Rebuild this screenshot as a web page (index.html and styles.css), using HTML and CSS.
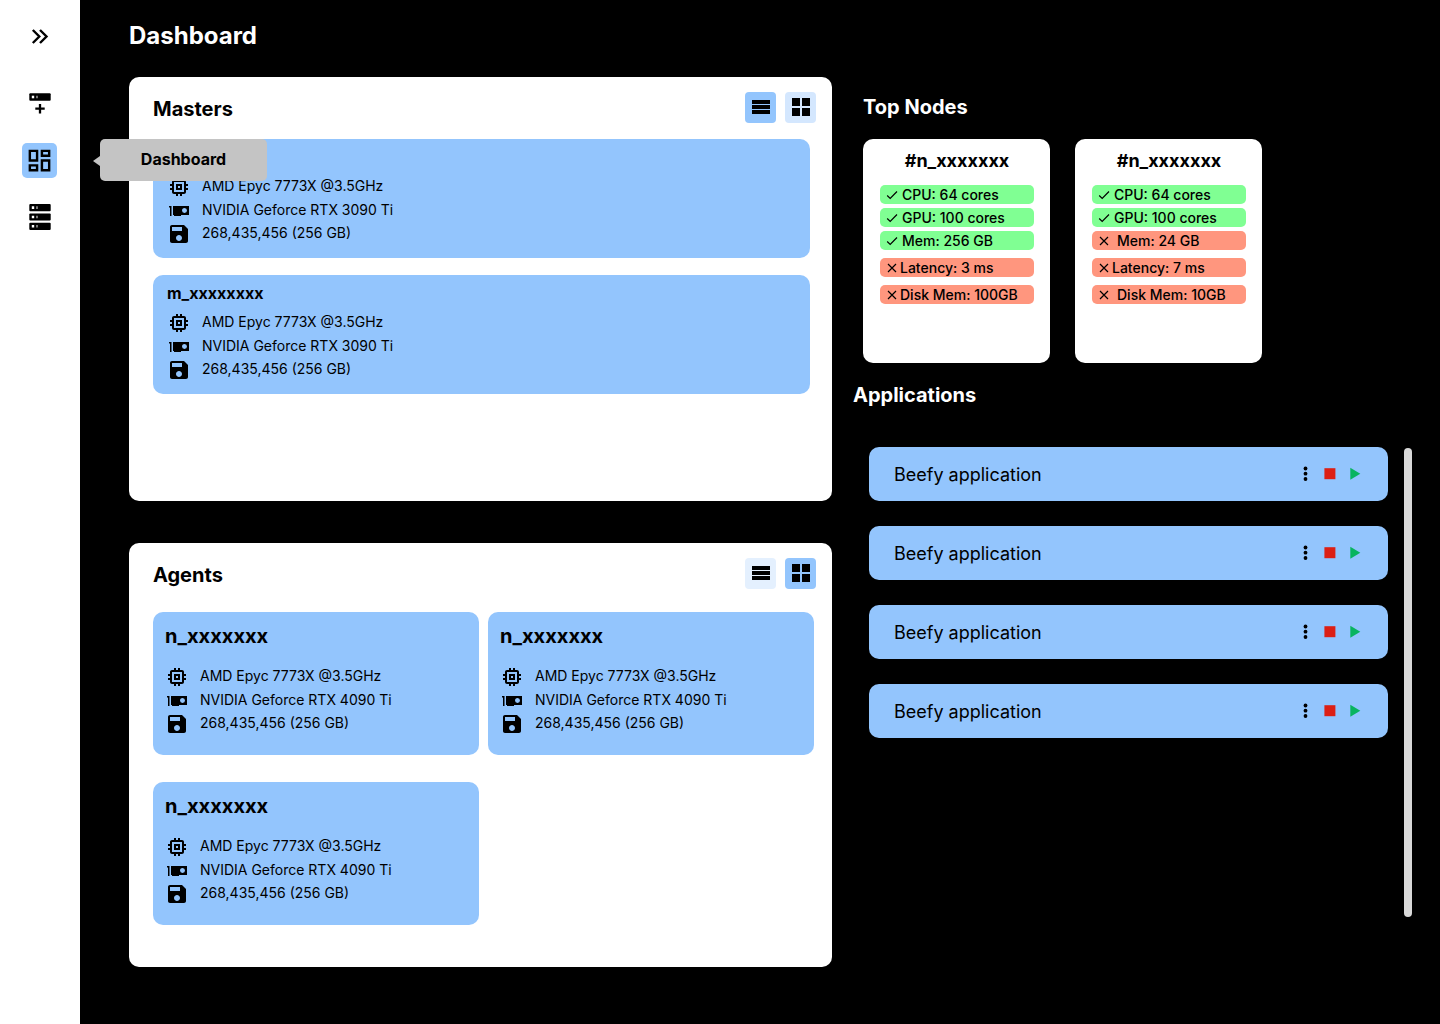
FILE: index.html
```html
<!DOCTYPE html>
<html lang="en">
<head>
<meta charset="utf-8">
<meta name="viewport" content="width=device-width, initial-scale=1">
<title>Dashboard</title>
<link rel="stylesheet" href="styles.css">
</head>
<body>
<svg class="sprite" aria-hidden="true">
  <symbol id="cpu" viewBox="0 0 24 24"><path d="M15 9H9v6h6V9zm-2 4h-2v-2h2v2zm8-2V9h-2V7c0-1.1-.9-2-2-2h-2V3h-2v2h-2V3H9v2H7c-1.1 0-2 .9-2 2v2H3v2h2v2H3v2h2v2c0 1.1.9 2 2 2h2v2h2v-2h2v2h2v-2h2c1.1 0 2-.9 2-2v-2h2v-2h-2v-2h2zm-4 6H7V7h10v10z"/></symbol>
  <symbol id="gpu" viewBox="0 0 24 24"><path d="M2 7v1.5h1V17h1.500V7H2m4 0v9h1v1h7v-1h8V7H6m11.500 2a2.500 2.500 0 0 1 0 5 2.500 2.500 0 0 1 0-5z"/></symbol>
  <symbol id="disk" viewBox="0 0 24 24"><path d="M17 3H5c-1.110 0-2 .9-2 2v14c0 1.100.890 2 2 2h14c1.100 0 2-.9 2-2V7l-4-4zm-5 16c-1.660 0-3-1.340-3-3s1.340-3 3-3 3 1.340 3 3-1.340 3-3 3zm3-10H5V5h10v4z"/></symbol>
  <symbol id="list" viewBox="0 0 18 18"><path d="M0 2h18v4H0zM0 7h18v4H0zM0 12h18v4H0z"/></symbol>
  <symbol id="tiles" viewBox="0 0 18 18"><path d="M0 0h8v8H0zM10 0h8v8h-8zM0 10h8v8H0zM10 10h8v8h-8z"/></symbol>
  <symbol id="check" viewBox="0 0 12 12"><path d="M1.200 6.500 4.200 9.500 11 2.500" fill="none" stroke="#000" stroke-width="1.200"/></symbol>
  <symbol id="cross" viewBox="0 0 12 12"><path d="M2 2l8 8M10 2l-8 8" fill="none" stroke="#000" stroke-width="1.200"/></symbol>
  <symbol id="more" viewBox="0 0 24 24"><circle cx="12.500" cy="6.500" r="1.900"/><circle cx="12.500" cy="11.700" r="1.900"/><circle cx="12.500" cy="17" r="1.900"/></symbol>
  <symbol id="stop" viewBox="0 0 24 24"><path d="M6.400 6.200h11v11h-11z" fill="#dc1f14"/></symbol>
  <symbol id="play" viewBox="0 0 24 24"><path d="M7.300 5.700v12l10-6z" fill="#09b45f"/></symbol>
</svg>

<div class="app">
  <nav class="sidebar" aria-label="Main">
    <button class="nav-item nav-toggle" type="button" aria-label="Expand menu">
      <svg width="25" height="25" viewBox="0 0 25 25" fill="none" stroke="#000" stroke-width="2.400"><path d="M5.800 6 12.300 12.500 5.800 19M13 6l6.500 6.500L13 19"/></svg>
    </button>
    <a class="nav-item" href="#add" aria-label="Add server">
      <svg width="25" height="25" viewBox="0 0 25 25"><rect x="2.300" y="2.300" width="21.400" height="7.400" rx="1"/><path d="M4.800 4.700h2.400v2.600H4.800z" fill="#fff"/><path d="M9.300 4.700h1.400v2.600H9.300z" fill="#aaa"/><path d="M13 13v9.400M8.300 17.700h9.400" stroke="#000" stroke-width="2.300"/></svg>
    </a>
    <a class="nav-item is-active" href="#dashboard" aria-current="page" aria-labelledby="tip">
      <svg width="29" height="29" viewBox="0 0 24 24"><path d="M19 5v2h-4V5h4M9 5v6H5V5h4m10 8v6h-4v-6h4M9 17v2H5v-2h4M21 3h-8v6h8V3zM11 3H3v10h8V3zm10 8h-8v10h8V11zm-10 4H3v6h8v-6z"/></svg>
      <span class="tooltip" id="tip">Dashboard</span>
    </a>
    <a class="nav-item" href="#servers" aria-label="Servers">
      <svg width="25" height="29" viewBox="0 0 25 29"><g><rect x="2.300" y="1" width="21.400" height="7.200" rx="1"/><rect x="2.300" y="10.400" width="21.400" height="7.200" rx="1"/><rect x="2.300" y="19.700" width="21.400" height="7.200" rx="1"/></g><path d="M4.800 3.300h2.400v2.600H4.800zM4.800 12.700h2.400v2.600H4.800zM4.800 22h2.400v2.600H4.800z" fill="#fff"/><path d="M9.300 3.300h1.400v2.600H9.300zM9.300 12.700h1.400v2.600H9.300zM9.300 22h1.400v2.600H9.300z" fill="#aaa"/></svg>
    </a>
  </nav>

  <main class="main">
    <h1 class="page-title">Dashboard</h1>
    <div class="columns">
      <div class="column">
        <section class="panel">
          <header class="panel-head">
            <h2 class="heading">Masters</h2>
            <div class="views">
              <button class="view is-on" type="button" aria-label="List view" aria-pressed="true"><svg><use href="#list"/></svg></button>
              <button class="view" type="button" aria-label="Grid view" aria-pressed="false"><svg><use href="#tiles"/></svg></button>
            </div>
          </header>
          <div class="masters">
            <article class="master untitled">
              <ul class="specs">
                <li><svg><use href="#cpu"/></svg>AMD Epyc 7773X @3.5GHz</li>
                <li><svg><use href="#gpu"/></svg>NVIDIA Geforce RTX 3090 Ti</li>
                <li><svg><use href="#disk"/></svg>268,435,456 (256 GB)</li>
              </ul>
            </article>
            <article class="master">
              <h3 class="master-name">m_xxxxxxxx</h3>
              <ul class="specs">
                <li><svg><use href="#cpu"/></svg>AMD Epyc 7773X @3.5GHz</li>
                <li><svg><use href="#gpu"/></svg>NVIDIA Geforce RTX 3090 Ti</li>
                <li><svg><use href="#disk"/></svg>268,435,456 (256 GB)</li>
              </ul>
            </article>
          </div>
        </section>

        <section class="panel">
          <header class="panel-head">
            <h2 class="heading">Agents</h2>
            <div class="views">
              <button class="view is-faint" type="button" aria-label="List view" aria-pressed="false"><svg><use href="#list"/></svg></button>
              <button class="view is-on" type="button" aria-label="Grid view" aria-pressed="true"><svg><use href="#tiles"/></svg></button>
            </div>
          </header>
          <div class="agents">
            <article class="agent">
              <h3 class="heading">n_xxxxxxx</h3>
              <ul class="specs">
                <li><svg><use href="#cpu"/></svg>AMD Epyc 7773X @3.5GHz</li>
                <li><svg><use href="#gpu"/></svg>NVIDIA Geforce RTX 4090 Ti</li>
                <li><svg><use href="#disk"/></svg>268,435,456 (256 GB)</li>
              </ul>
            </article>
            <article class="agent">
              <h3 class="heading">n_xxxxxxx</h3>
              <ul class="specs">
                <li><svg><use href="#cpu"/></svg>AMD Epyc 7773X @3.5GHz</li>
                <li><svg><use href="#gpu"/></svg>NVIDIA Geforce RTX 4090 Ti</li>
                <li><svg><use href="#disk"/></svg>268,435,456 (256 GB)</li>
              </ul>
            </article>
            <article class="agent">
              <h3 class="heading">n_xxxxxxx</h3>
              <ul class="specs">
                <li><svg><use href="#cpu"/></svg>AMD Epyc 7773X @3.5GHz</li>
                <li><svg><use href="#gpu"/></svg>NVIDIA Geforce RTX 4090 Ti</li>
                <li><svg><use href="#disk"/></svg>268,435,456 (256 GB)</li>
              </ul>
            </article>
          </div>
        </section>
      </div>

      <div class="side">
        <section class="top-nodes">
          <h2 class="heading">Top Nodes</h2>
          <div class="nodes">
            <article class="node">
              <h3 class="node-name">#n_xxxxxxx</h3>
              <ul class="chips">
                <li class="chip good"><svg><use href="#check"/></svg>CPU: 64 cores</li>
                <li class="chip good"><svg><use href="#check"/></svg>GPU: 100 cores</li>
                <li class="chip good"><svg><use href="#check"/></svg>Mem: 256 GB</li>
                <li class="chip bad spaced"><svg><use href="#cross"/></svg>Latency: 3 ms</li>
                <li class="chip bad spaced"><svg><use href="#cross"/></svg>Disk Mem: 100GB</li>
              </ul>
            </article>
            <article class="node">
              <h3 class="node-name">#n_xxxxxxx</h3>
              <ul class="chips">
                <li class="chip good"><svg><use href="#check"/></svg>CPU: 64 cores</li>
                <li class="chip good"><svg><use href="#check"/></svg>GPU: 100 cores</li>
                <li class="chip bad wide"><svg><use href="#cross"/></svg>Mem: 24 GB</li>
                <li class="chip bad spaced"><svg><use href="#cross"/></svg>Latency: 7 ms</li>
                <li class="chip bad wide spaced"><svg><use href="#cross"/></svg>Disk Mem: 10GB</li>
              </ul>
            </article>
          </div>
        </section>

        <section class="applications">
          <h2 class="heading">Applications</h2>
          <div class="app-area">
            <ul class="app-list">
              <li class="app-row">
                <span class="app-name">Beefy application</span>
                <button class="action" type="button" aria-label="More"><svg><use href="#more"/></svg></button>
                <button class="action" type="button" aria-label="Stop"><svg><use href="#stop"/></svg></button>
                <button class="action" type="button" aria-label="Start"><svg><use href="#play"/></svg></button>
              </li>
              <li class="app-row">
                <span class="app-name">Beefy application</span>
                <button class="action" type="button" aria-label="More"><svg><use href="#more"/></svg></button>
                <button class="action" type="button" aria-label="Stop"><svg><use href="#stop"/></svg></button>
                <button class="action" type="button" aria-label="Start"><svg><use href="#play"/></svg></button>
              </li>
              <li class="app-row">
                <span class="app-name">Beefy application</span>
                <button class="action" type="button" aria-label="More"><svg><use href="#more"/></svg></button>
                <button class="action" type="button" aria-label="Stop"><svg><use href="#stop"/></svg></button>
                <button class="action" type="button" aria-label="Start"><svg><use href="#play"/></svg></button>
              </li>
              <li class="app-row">
                <span class="app-name">Beefy application</span>
                <button class="action" type="button" aria-label="More"><svg><use href="#more"/></svg></button>
                <button class="action" type="button" aria-label="Stop"><svg><use href="#stop"/></svg></button>
                <button class="action" type="button" aria-label="Start"><svg><use href="#play"/></svg></button>
              </li>
            </ul>
            <div class="scroll-thumb"></div>
          </div>
        </section>
      </div>
    </div>
  </main>
</div>
</body>
</html>
```

FILE: styles.css
```css
* {
  box-sizing: border-box;
}

body {
  margin: 0;
  background: #000;
  color: #000;
  font-family: Inter, "Liberation Sans", sans-serif;
  font-size: 14px;
  line-height: 20px;
}

h1, h2, h3, ul {
  margin: 0;
  padding: 0;
}

ul {
  list-style: none;
}

button {
  border: 0;
  padding: 0;
  background: none;
  cursor: pointer;
}

svg {
  display: block;
  flex: none;
}

.sprite {
  position: absolute;
  width: 0;
  height: 0;
}

.app {
  display: flex;
  min-height: 100vh;
}

/* Sidebar */
.sidebar {
  display: flex;
  flex: none;
  flex-direction: column;
  gap: 22px;
  width: 80px;
  padding: 19px 0 0 22px;
  background: #fff;
}

.nav-item {
  position: relative;
  display: flex;
  align-items: center;
  justify-content: center;
  width: 35px;
  height: 35px;
  border-radius: 5px;
  color: #000;
  text-decoration: none;
}

.nav-toggle {
  margin-bottom: 10px;
}

.nav-item.is-active {
  background: #93c5fd;
}

.tooltip {
  position: absolute;
  z-index: 1;
  top: -4px;
  left: 78px;
  width: 167px;
  height: 42px;
  border-radius: 5px;
  background: #c4c4c4;
  font-size: 16px;
  font-weight: 700;
  line-height: 41px;
  text-align: center;
}

.tooltip::before {
  content: "";
  position: absolute;
  top: 17px;
  right: 100%;
  border: solid transparent;
  border-width: 5px 7px 5px 0;
  border-right-color: #c4c4c4;
}

/* Page */
.main {
  flex: 1;
  min-width: 0;
  padding: 20px 28px 56px 49px;
}

.page-title {
  margin-bottom: 25px;
  color: #fff;
  font-size: 24px;
  font-weight: 700;
  line-height: 32px;
}

.columns {
  display: grid;
  grid-template-columns: 703fr 559fr;
  gap: 21px;
  align-items: start;
}

.column {
  display: grid;
  gap: 42px;
}

.heading {
  font-size: 20px;
  font-weight: 700;
  line-height: 24px;
}

/* Masters and agents */
.panel {
  min-height: 424px;
  padding: 15px 16px 24px 24px;
  border-radius: 10px;
  background: #fff;
}

.panel-head {
  display: flex;
  align-items: center;
  justify-content: space-between;
}

.panel-head .heading {
  padding-top: 2px;
}

.views {
  display: flex;
  gap: 9px;
}

.view {
  width: 31px;
  height: 31px;
  padding: 6px 6px 7px 7px;
  border-radius: 4px;
  background: #d4e7fe;
}

.view.is-faint {
  background: #e4f0fe;
}

.view.is-on {
  background: #93c5fd;
}

.view svg {
  width: 18px;
  height: 18px;
}

.masters {
  display: grid;
  gap: 17px;
  margin: 16px 6px 0 0;
}

.master {
  padding: 8px 14px 12px;
  border-radius: 10px;
  background: #93c5fd;
}

.master.untitled {
  padding-top: 36px;
}

.master-name {
  margin-bottom: 8px;
  font-size: 16px;
  font-weight: 700;
  line-height: 20px;
}

.agents {
  display: grid;
  grid-template-columns: 1fr 1fr;
  gap: 27px 9px;
  margin: 23px 2px 0 0;
}

.agent {
  padding: 12px 12px 19px;
  border-radius: 10px;
  background: #93c5fd;
}

.agent .specs {
  margin-top: 17px;
}

.specs {
  display: grid;
  grid-template-rows: 24px 23px 24px;
}

.specs li {
  display: flex;
  align-items: flex-start;
  gap: 11px;
  line-height: 22px;
}

.specs svg {
  width: 24px;
  height: 24px;
}

/* Top nodes */
.side {
  display: grid;
  gap: 20px;
  padding-top: 18px;
  color: #fff;
}

.top-nodes {
  padding-left: 10px;
}

.nodes {
  display: flex;
  gap: 25px;
  margin-top: 20px;
  color: #000;
}

.node {
  width: 187px;
  min-height: 224px;
  padding: 10px 16px 16px 17px;
  border-radius: 10px;
  background: #fff;
}

.node-name {
  font-size: 18px;
  font-weight: 700;
  line-height: 24px;
  text-align: center;
}

.chips {
  display: flex;
  flex-direction: column;
  gap: 4px;
  margin-top: 12px;
}

.chip {
  display: flex;
  align-items: center;
  gap: 4px;
  height: 19px;
  padding-left: 6px;
  border-radius: 5px;
  font-weight: 500;
  line-height: 19px;
  white-space: nowrap;
}

.chip svg {
  width: 12px;
  height: 12px;
}

.chip.good {
  background: #80ff93;
}

.chip.bad {
  gap: 2px;
  background: #ff967e;
}

.chip.wide {
  gap: 7px;
}

.chip.spaced {
  margin-top: 4px;
}

/* Applications */
.app-area {
  display: flex;
  gap: 16px;
  min-height: 470px;
  margin-top: 40px;
  padding-left: 16px;
}

.app-list {
  display: flex;
  flex: 1;
  flex-direction: column;
  gap: 25px;
  color: #000;
}

.app-row {
  display: flex;
  align-items: center;
  gap: 1px;
  height: 54px;
  padding: 0 21px 0 25px;
  border-radius: 10px;
  background: #93c5fd;
}

.app-name {
  flex: 1;
  padding-top: 2px;
  font-size: 18px;
  line-height: 24px;
}

.action svg {
  width: 24px;
  height: 24px;
}

.scroll-thumb {
  width: 8px;
  margin-top: 1px;
  border-radius: 4px;
  background: #d9d9d9;
}
```
